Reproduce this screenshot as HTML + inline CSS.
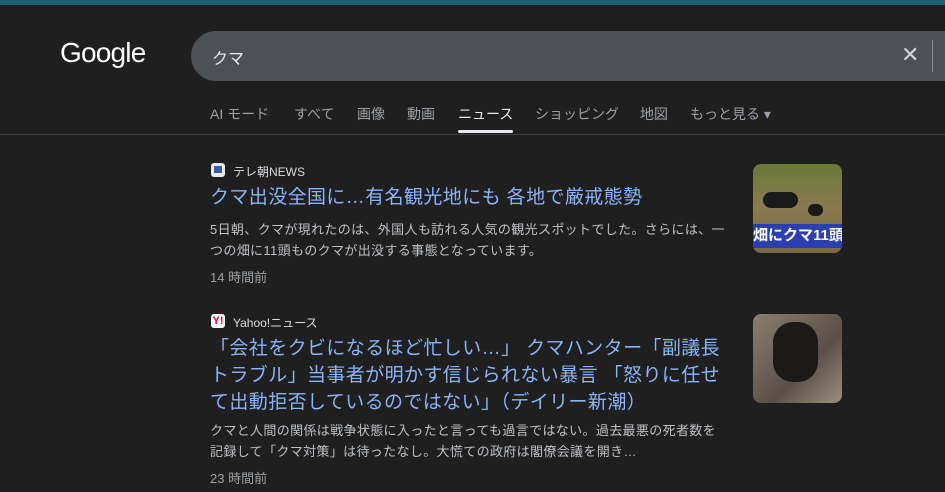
<!DOCTYPE html>
<html><head><meta charset="utf-8"><style>
*{margin:0;padding:0;box-sizing:border-box}
body{width:945px;height:492px;overflow:hidden;background:#1f1f1f;font-family:"Liberation Sans","Noto Sans CJK JP",sans-serif;position:relative;color:#bdc1c6}
.top{position:absolute;left:0;top:0;width:945px;height:5px;background:#1b6079}
.logo{position:absolute;left:60px;top:37px;font-size:28px;color:#fff;letter-spacing:-0.8px}
.search{position:absolute;left:191px;top:31px;width:780px;height:50px;border-radius:25px;background:#4d5156}
.q{position:absolute;left:212px;top:45px;font-size:16px;color:#e8eaed}
.x{position:absolute;left:901px;top:42px;font-size:22px;color:#d0d3d7}
.sep{position:absolute;left:932px;top:40px;width:1px;height:32px;background:#8a8d91}
.tabs{position:absolute;top:104px;font-size:14px;color:#9aa0a6}
.tabs span{position:absolute;white-space:nowrap}
.ul{position:absolute;left:458px;top:130px;width:55px;height:3px;background:#e8eaed;border-radius:2px}
.hr{position:absolute;left:0;top:134px;width:945px;height:1px;background:#3c4043}
.src{position:absolute;font-size:12px;color:#dadce0}
.fav{position:absolute;width:14px;height:14px;border-radius:3px}
.t{position:absolute;font-size:19px;color:#8ab4f8;line-height:27px;width:518px;letter-spacing:0.4px}
.d{position:absolute;font-size:13px;color:#bdc1c6;line-height:21px;width:525px;letter-spacing:0.35px}
.tm{position:absolute;font-size:13px;color:#9aa0a6}
.img{position:absolute;width:89px;height:89px;border-radius:8px;overflow:hidden}
</style></head><body>
<div class="top"></div>
<div class="logo">Google</div>
<div class="search"></div>
<div class="q">クマ</div>
<div class="x">✕</div>
<div class="sep"></div>
<div class="tabs">
<span style="left:210px">AI モード</span>
<span style="left:294px">すべて</span>
<span style="left:357px">画像</span>
<span style="left:407px">動画</span>
<span style="left:458px;color:#e8eaed">ニュース</span>
<span style="left:535px">ショッピング</span>
<span style="left:640px">地図</span>
<span style="left:690px">もっと見る ▾</span>
</div>
<div class="ul"></div>
<div class="hr"></div>

<div class="fav" style="left:211px;top:163px;background:#e8eaed"><div style="margin:3px;width:8px;height:7px;background:#3b5ea8"></div></div>
<div class="src" style="left:233px;top:163px">テレ朝NEWS</div>
<div class="t" style="left:210px;top:184px">クマ出没全国に…有名観光地にも 各地で厳戒態勢</div>
<div class="d" style="left:210px;top:219px">5日朝、クマが現れたのは、外国人も訪れる人気の観光スポットでした。さらには、一<br>つの畑に11頭ものクマが出没する事態となっています。</div>
<div class="tm" style="left:210px;top:267px">14 時間前</div>
<div class="img" style="left:753px;top:164px;background:linear-gradient(#6a7a3a,#8a7a50 50%,#7a6a48)">
<div style="position:absolute;left:10px;top:28px;width:35px;height:16px;background:#1a1a1a;border-radius:8px"></div>
<div style="position:absolute;left:55px;top:40px;width:15px;height:12px;background:#1a1a1a;border-radius:6px"></div>
<div style="position:absolute;left:0;top:60px;width:89px;height:24px;background:#2b3fb0;color:#fff;font-size:15px;font-weight:bold;line-height:24px;white-space:nowrap">畑にクマ11頭</div>
</div>

<div class="fav" style="left:211px;top:314px;background:#fff;color:#e0003c;font-size:11px;font-weight:bold;text-align:center;line-height:14px">Y!</div>
<div class="src" style="left:233px;top:314px">Yahoo!ニュース</div>
<div class="t" style="left:210px;top:335px">「会社をクビになるほど忙しい…」 クマハンター「副議長トラブル」当事者が明かす信じられない暴言 「怒りに任せて出動拒否しているのではない」（デイリー新潮）</div>
<div class="d" style="left:210px;top:420px">クマと人間の関係は戦争状態に入ったと言っても過言ではない。過去最悪の死者数を<br>記録して「クマ対策」は待ったなし。大慌ての政府は閣僚会議を開き…</div>
<div class="tm" style="left:210px;top:468px">23 時間前</div>
<div class="img" style="left:753px;top:314px;background:linear-gradient(135deg,#8a8070,#5a5048 60%,#9a9080)">
<div style="position:absolute;left:20px;top:8px;width:45px;height:60px;background:#1c1a18;border-radius:20px"></div>
</div>
</body></html>
